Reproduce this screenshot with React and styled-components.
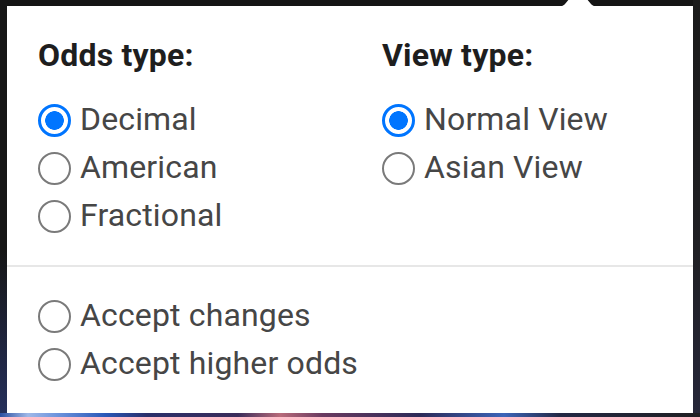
import React from 'react';
import styled, { createGlobalStyle } from 'styled-components';

const GlobalStyle = createGlobalStyle`
    html, body {
        margin: 0;
        padding: 0;
        background: #161616;
    }
    #root {
        min-height: 100vh;
    }
`;

const Page = styled.div`
    min-height: 100vh;
    box-sizing: border-box;
    padding: 6px 7px 4px 7px;
    font-family: Roboto, "Noto Sans", "Liberation Sans", sans-serif;
    background:
        linear-gradient(90deg,
            #2b4fa0 0%, #9fb8e8 4%, #6f95dd 8%, #2a58b8 15%, #2a2f6a 21%,
            #3a2c5a 34%, #b86a7a 40%, #6a3a60 46%, #2c2a58 60%,
            #3c64b8 72%, #232844 80%, #1f1f22 100%) left bottom / 100% 4px no-repeat,
        linear-gradient(180deg, #161616 0%, #161616 60%, #25305c 100%) left top / 7px 100% no-repeat,
        linear-gradient(180deg, #1b1b1b 0%, #202024 60%, #26273a 100%) right top / 7px 100% no-repeat,
        #151515;
`;

const Panel = styled.div`
    position: relative;
    background: #fff;
    min-height: 407px;
    box-sizing: border-box;
    padding: 25px 0 26px;
`;

const Caret = styled.svg`
    position: absolute;
    top: -8px;
    left: 549px;
    display: block;
`;

const Columns = styled.div`
    display: grid;
    grid-template-columns: 344px 1fr;
    padding: 0 31px 26px;
`;

const Group = styled.div`
    display: flex;
    flex-direction: column;
`;

const Heading = styled.div`
    font-size: 32px;
    line-height: 48px;
    font-weight: 700;
    letter-spacing: 0.2px;
    color: #1e1e1e;
    margin-bottom: 16px;
`;

const Divider = styled.hr`
    border: 0;
    height: 2px;
    margin: 0 0 24px;
    background: #e7e7e7;
`;

const Options = styled.div`
    display: flex;
    flex-direction: column;
    padding: 0 31px;
`;

const Option = styled.label`
    display: flex;
    align-items: center;
    gap: 9px;
    height: 48px;
    font-size: 32px;
    line-height: 48px;
    letter-spacing: 0.15px;
    color: #464646;
    cursor: pointer;
`;

const Radio = styled.span`
    flex: none;
    box-sizing: border-box;
    width: 33px;
    height: 33px;
    margin-top: 2px;
    border-radius: 50%;
    border: ${({ $checked }) => ($checked ? '3px solid #0075ff' : '2px solid #7a7a7a')};
    background: ${({ $checked }) =>
        $checked ? 'radial-gradient(circle, #0075ff 0 9px, #fff 9.6px)' : '#fff'};
`;

const RadioOption = ({ label, checked }) => (
    <Option>
        <Radio $checked={checked} />
        <span>{label}</span>
    </Option>
);

const App = () => {
    return (
        <>
            <GlobalStyle />
            <Page>
                <Panel>
                    <Caret width="44" height="9" viewBox="0 0 44 9">
                        <path d="M0 9 C5 9 7 8 9 6 L14 0 H30 L35 6 C37 8 39 9 44 9 Z" fill="#fff" />
                    </Caret>
                    <Columns>
                        <Group>
                            <Heading>Odds type:</Heading>
                            <RadioOption label="Decimal" checked />
                            <RadioOption label="American" />
                            <RadioOption label="Fractional" />
                        </Group>
                        <Group>
                            <Heading>View type:</Heading>
                            <RadioOption label="Normal View" checked />
                            <RadioOption label="Asian View" />
                        </Group>
                    </Columns>
                    <Divider />
                    <Options>
                        <RadioOption label="Accept changes" />
                        <RadioOption label="Accept higher odds" />
                    </Options>
                </Panel>
            </Page>
        </>
    );
};

export default App;
